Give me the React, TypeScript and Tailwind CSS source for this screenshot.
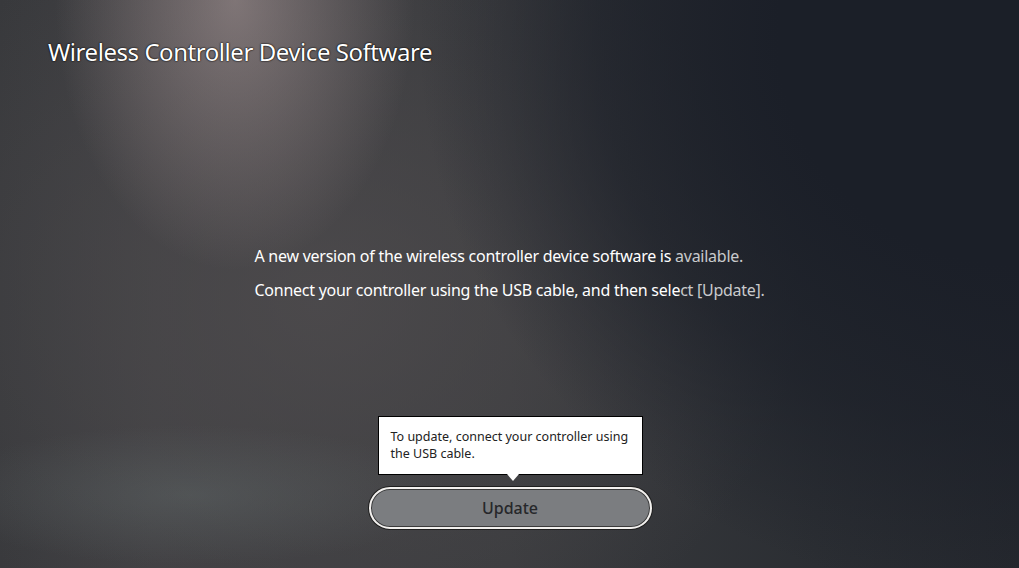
export default function App() {
  return (
    <div
      className="relative flex h-[568px] w-[1019px] flex-col overflow-hidden bg-[radial-gradient(ellipse_180px_270px_at_235px_0px,rgba(178,160,160,0.55),transparent),radial-gradient(ellipse_260px_70px_at_190px_495px,rgba(110,122,122,0.3),transparent),radial-gradient(ellipse_600px_560px_at_1019px_40px,#1b1f28_40%,rgba(27,31,40,0.65)_70%,transparent),radial-gradient(ellipse_480px_400px_at_320px_300px,rgba(80,77,79,0.75),transparent),linear-gradient(90deg,#38393c_0%,#3f3f42_15%,#3a3b3e_50%,#2b2e33_80%,#25282e_100%)] font-['Noto_Sans',sans-serif]"
    >
      <h1 className="pl-12 pt-[36px] text-[24px] leading-8 tracking-[-0.45px] text-white [text-shadow:0_0_2px_#000,0_0_1px_#000]">
        Wireless Controller Device Software
      </h1>

      <div className="mt-[171px] flex justify-center">
        <div className="w-[510px] whitespace-nowrap text-[16px] leading-[34px] tracking-[-0.26px] text-white">
          <p>
            A new version of the wireless controller device software is <span className="text-[#c9cacc]">available.</span>
          </p>
          <p>
            Connect your controller using the USB cable, and then sele<span className="text-[#c9cacc]">ct [Update].</span>
          </p>
        </div>
      </div>

      <div className="mt-[109px] flex flex-col items-center">
        <div className="relative ml-[1px] w-[265px] border border-black bg-white px-[12px] pb-[12px] pt-[11px] text-[12.5px] leading-[17px] text-[#222]">
          To update, connect your controller using the USB cable.
          <div className="absolute -bottom-[7px] left-[128px] h-0 w-0 border-x-[6px] border-t-[7px] border-x-transparent border-t-white" />
        </div>
        <div className="mt-[12px] ml-[1px] flex h-[42px] w-[283px] items-center justify-center rounded-full border-2 border-[#f2f0ee] bg-[#7b7d80] text-[16px] font-medium text-[#26272a] [box-shadow:0_0_0_1px_#1e1e1e,inset_0_0_0_1px_#3a3a3a]">
          Update
        </div>
      </div>
    </div>
  )
}
